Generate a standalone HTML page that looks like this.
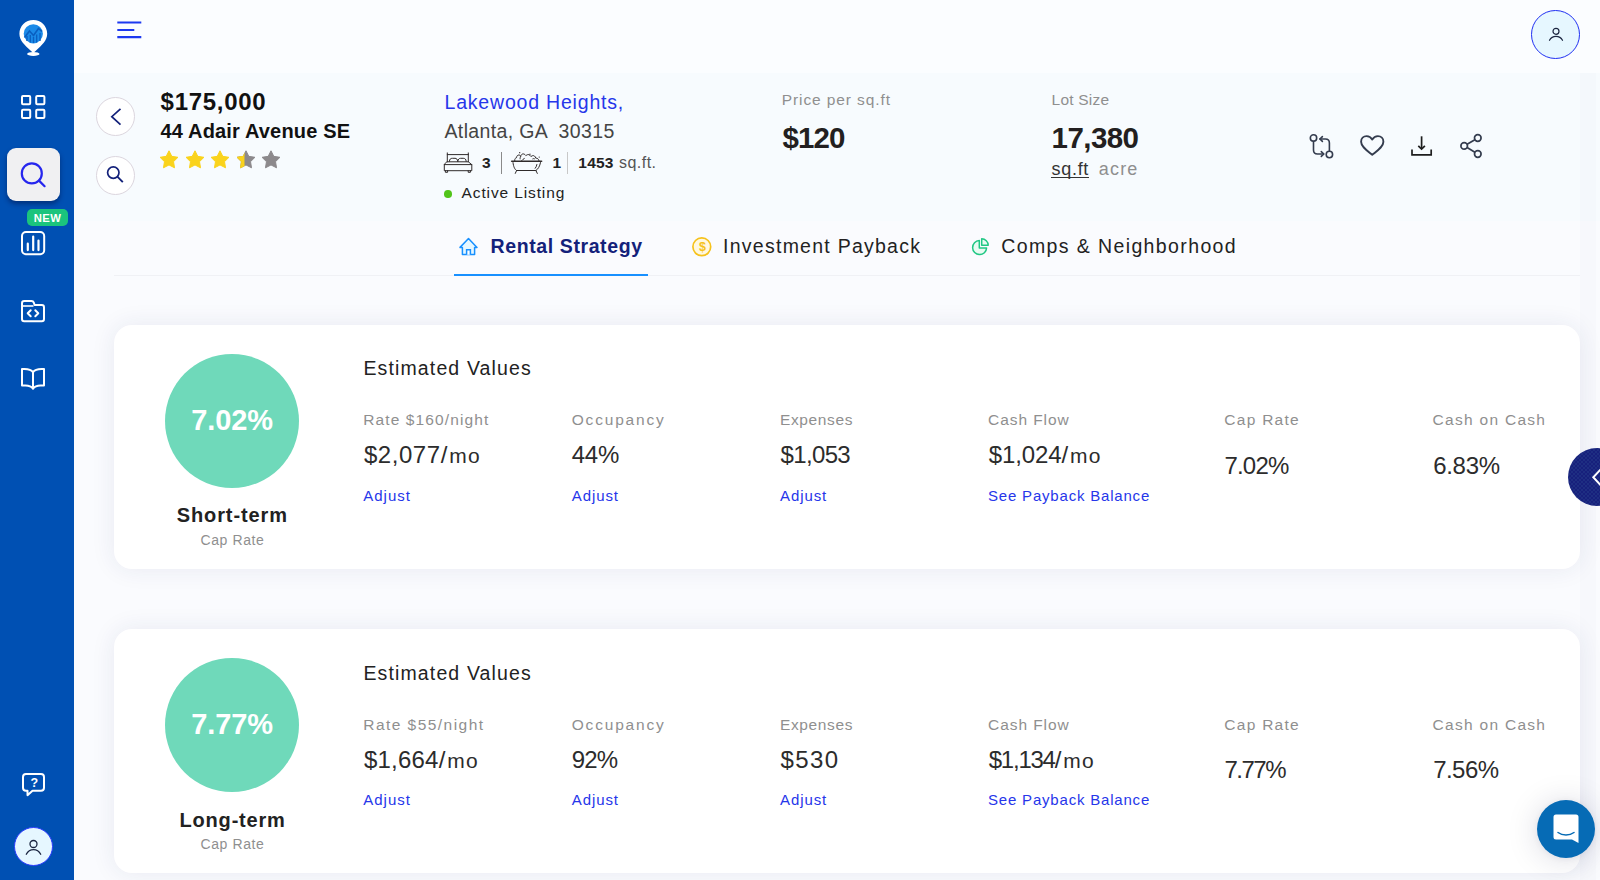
<!DOCTYPE html>
<html lang="en">
<head>
<meta charset="utf-8">
<title>Property Analysis</title>
<style>
*{box-sizing:border-box;margin:0;padding:0}
html,body{width:1600px;height:880px;overflow:hidden}
body{position:relative;background:#fafbfe;font-family:"Liberation Sans",sans-serif;color:#222}
.t{position:absolute;white-space:pre;display:block}
.abs{position:absolute}
svg{position:absolute;overflow:visible}
.side{left:0;top:0;width:74px;height:880px;background:#0050b3}
.topbar{left:74px;top:0;width:1526px;height:73px;background:#fbfdff}
.prop{left:74px;top:73px;width:1526px;height:148px;background:#f7fbfe}
.card{left:114px;width:1466px;height:244px;background:#fff;border-radius:18px;box-shadow:0 0 24px rgba(40,50,110,.085)}
.circ{width:134px;height:134px;border-radius:50%;background:#6fd9ba}
.rbtn{width:39px;height:39px;border-radius:50%;background:#fff;border:1px solid #dcd6de}
</style>
</head>
<body>
<div class="abs topbar"></div>
<div class="abs prop"></div>
<div class="abs side"></div>
<div class="abs" style="left:1580px;top:73px;width:16px;height:807px;background:rgba(30,40,100,.010)"></div>
<div class="abs" style="left:114px;top:275px;width:1466px;height:1px;background:#f0f1f5"></div>
<div class="abs" style="left:453.5px;top:274px;width:194.5px;height:2px;background:#1890ff"></div>
<div class="abs card" style="top:325px"></div>
<div class="abs card" style="top:629px"></div>
<span class="t" style="left:160.60px;top:88px;font-size:24px;line-height:27px;letter-spacing:0.718px;color:#111;font-weight:700;">$175,000</span>
<span class="t" style="left:160.50px;top:120px;font-size:20px;line-height:22px;letter-spacing:0.162px;color:#111;font-weight:700;">44 Adair Avenue SE</span>
<span class="t" style="left:444.50px;top:91px;font-size:19.5px;line-height:22px;letter-spacing:0.805px;color:#2636ea;">Lakewood Heights,</span>
<span class="t" style="left:444.50px;top:120px;font-size:19.5px;line-height:22px;letter-spacing:0.357px;color:#444;">Atlanta, GA  30315</span>
<span class="t" style="left:482.00px;top:154px;font-size:15.5px;line-height:17px;letter-spacing:0.000px;color:#222;font-weight:700;">3</span>
<span class="t" style="left:552.50px;top:154px;font-size:15.5px;line-height:17px;letter-spacing:0.000px;color:#222;font-weight:700;">1</span>
<span class="t" style="left:578.30px;top:154px;font-size:15.5px;line-height:17px;letter-spacing:0.233px;color:#222;font-weight:700;">1453</span>
<span class="t" style="left:619.00px;top:154px;font-size:16px;line-height:17px;letter-spacing:0.463px;color:#555;">sq.ft.</span>
<span class="t" style="left:461.60px;top:184px;font-size:15.5px;line-height:17px;letter-spacing:0.876px;color:#222;">Active Listing</span>
<span class="t" style="left:781.75px;top:91px;font-size:15.5px;line-height:17px;letter-spacing:0.902px;color:#8f8f8f;">Price per sq.ft</span>
<span class="t" style="left:782.50px;top:121px;font-size:29.5px;line-height:33px;letter-spacing:-0.875px;color:#231f20;font-weight:700;">$120</span>
<span class="t" style="left:1051.60px;top:91px;font-size:15.5px;line-height:17px;letter-spacing:0.200px;color:#8f8f8f;">Lot Size</span>
<span class="t" style="left:1051.60px;top:121px;font-size:29.5px;line-height:33px;letter-spacing:-0.570px;color:#231f20;font-weight:700;">17,380</span>
<span class="t" style="left:1051.60px;top:159px;font-size:18px;line-height:20px;letter-spacing:0.675px;color:#333;">sq.ft</span>
<div class="abs" style="left:1051px;top:176.5px;width:37.5px;height:1px;background:#333"></div>
<span class="t" style="left:1098.80px;top:159px;font-size:18px;line-height:20px;letter-spacing:1.167px;color:#8f8f8f;">acre</span>
<div class="abs" style="left:501px;top:152px;width:1px;height:22px;background:#8a8a8a"></div>
<div class="abs" style="left:567px;top:152px;width:1px;height:22px;background:#c8c8c8"></div>
<div class="abs" style="left:444px;top:190.2px;width:7.6px;height:7.6px;border-radius:50%;background:#52c41a"></div>
<span class="t" style="left:490.60px;top:235px;font-size:19.5px;line-height:22px;letter-spacing:0.596px;color:#13217a;font-weight:700;">Rental Strategy</span>
<span class="t" style="left:723.10px;top:235px;font-size:19.5px;line-height:22px;letter-spacing:1.251px;color:#222;">Investment Payback</span>
<span class="t" style="left:1001.30px;top:235px;font-size:19.5px;line-height:22px;letter-spacing:1.383px;color:#222;">Comps &amp; Neighborhood</span>
<div class="abs circ" style="left:165px;top:353.7px"></div>
<span class="t" style="left:191.25px;top:404px;font-size:29px;line-height:32px;letter-spacing:-0.125px;color:#fff;font-weight:700;">7.02%</span>
<span class="t" style="left:176.75px;top:504px;font-size:20px;line-height:22px;letter-spacing:0.889px;color:#222;font-weight:700;">Short-term</span>
<span class="t" style="left:200.50px;top:532px;font-size:14px;line-height:16px;letter-spacing:0.589px;color:#8f8f8f;">Cap Rate</span>
<span class="t" style="left:363.40px;top:357px;font-size:19.5px;line-height:22px;letter-spacing:1.139px;color:#222;">Estimated Values</span>
<span class="t" style="left:363.25px;top:411px;font-size:15.5px;line-height:17px;letter-spacing:1.112px;color:#8f8f8f;">Rate $160/night</span>
<span class="t" style="left:571.75px;top:411px;font-size:15.5px;line-height:17px;letter-spacing:1.805px;color:#8f8f8f;">Occupancy</span>
<span class="t" style="left:780.00px;top:411px;font-size:15.5px;line-height:17px;letter-spacing:0.634px;color:#8f8f8f;">Expenses</span>
<span class="t" style="left:988.00px;top:411px;font-size:15.5px;line-height:17px;letter-spacing:0.938px;color:#8f8f8f;">Cash Flow</span>
<span class="t" style="left:1224.25px;top:411px;font-size:15.5px;line-height:17px;letter-spacing:1.286px;color:#8f8f8f;">Cap Rate</span>
<span class="t" style="left:1432.50px;top:411px;font-size:15.5px;line-height:17px;letter-spacing:1.295px;color:#8f8f8f;">Cash on Cash</span>
<span class="t" style="left:363.90px;top:441px;font-size:24px;line-height:27px;letter-spacing:0.562px;color:#2c2c2c;">$2,077/<span style="font-size:21px;letter-spacing:1.212px;margin-left:1.39px">mo</span></span>
<span class="t" style="left:571.75px;top:441px;font-size:24px;line-height:27px;letter-spacing:-0.281px;color:#2c2c2c;">44%</span>
<span class="t" style="left:780.50px;top:441px;font-size:24px;line-height:27px;letter-spacing:-0.637px;color:#2c2c2c;">$1,053</span>
<span class="t" style="left:988.75px;top:441px;font-size:24px;line-height:27px;letter-spacing:-0.121px;color:#2c2c2c;">$1,024/<span style="font-size:21px;letter-spacing:1.213px;margin-left:2.07px">mo</span></span>
<span class="t" style="left:1224.50px;top:452px;font-size:24px;line-height:27px;letter-spacing:-0.828px;color:#2c2c2c;">7.02%</span>
<span class="t" style="left:1433.25px;top:452px;font-size:24px;line-height:27px;letter-spacing:-0.328px;color:#2c2c2c;">6.83%</span>
<span class="t" style="left:363.25px;top:487px;font-size:15px;line-height:17px;letter-spacing:1.012px;color:#2636ea;">Adjust</span>
<span class="t" style="left:571.75px;top:487px;font-size:15px;line-height:17px;letter-spacing:0.912px;color:#2636ea;">Adjust</span>
<span class="t" style="left:780.00px;top:487px;font-size:15px;line-height:17px;letter-spacing:0.912px;color:#2636ea;">Adjust</span>
<span class="t" style="left:988.00px;top:487px;font-size:15px;line-height:17px;letter-spacing:0.806px;color:#2636ea;">See Payback Balance</span>
<div class="abs circ" style="left:165px;top:658.3px"></div>
<span class="t" style="left:191.25px;top:708px;font-size:29px;line-height:32px;letter-spacing:-0.125px;color:#fff;font-weight:700;">7.77%</span>
<span class="t" style="left:179.50px;top:809px;font-size:20px;line-height:22px;letter-spacing:0.816px;color:#222;font-weight:700;">Long-term</span>
<span class="t" style="left:200.50px;top:836px;font-size:14px;line-height:16px;letter-spacing:0.589px;color:#8f8f8f;">Cap Rate</span>
<span class="t" style="left:363.40px;top:662px;font-size:19.5px;line-height:22px;letter-spacing:1.139px;color:#222;">Estimated Values</span>
<span class="t" style="left:363.25px;top:716px;font-size:15.5px;line-height:17px;letter-spacing:1.457px;color:#8f8f8f;">Rate $55/night</span>
<span class="t" style="left:571.75px;top:716px;font-size:15.5px;line-height:17px;letter-spacing:1.805px;color:#8f8f8f;">Occupancy</span>
<span class="t" style="left:780.00px;top:716px;font-size:15.5px;line-height:17px;letter-spacing:0.634px;color:#8f8f8f;">Expenses</span>
<span class="t" style="left:988.00px;top:716px;font-size:15.5px;line-height:17px;letter-spacing:0.938px;color:#8f8f8f;">Cash Flow</span>
<span class="t" style="left:1224.25px;top:716px;font-size:15.5px;line-height:17px;letter-spacing:1.286px;color:#8f8f8f;">Cap Rate</span>
<span class="t" style="left:1432.50px;top:716px;font-size:15.5px;line-height:17px;letter-spacing:1.295px;color:#8f8f8f;">Cash on Cash</span>
<span class="t" style="left:363.90px;top:746px;font-size:24px;line-height:27px;letter-spacing:0.229px;color:#2c2c2c;">$1,664/<span style="font-size:21px;letter-spacing:1.212px;margin-left:1.72px">mo</span></span>
<span class="t" style="left:571.75px;top:746px;font-size:24px;line-height:27px;letter-spacing:-0.906px;color:#2c2c2c;">92%</span>
<span class="t" style="left:780.50px;top:746px;font-size:24px;line-height:27px;letter-spacing:1.375px;color:#2c2c2c;">$530</span>
<span class="t" style="left:988.75px;top:746px;font-size:24px;line-height:27px;letter-spacing:-1.246px;color:#2c2c2c;">$1,134/<span style="font-size:21px;letter-spacing:1.213px;margin-left:3.20px">mo</span></span>
<span class="t" style="left:1224.50px;top:756px;font-size:24px;line-height:27px;letter-spacing:-1.516px;color:#2c2c2c;">7.77%</span>
<span class="t" style="left:1433.25px;top:756px;font-size:24px;line-height:27px;letter-spacing:-0.578px;color:#2c2c2c;">7.56%</span>
<span class="t" style="left:363.25px;top:791px;font-size:15px;line-height:17px;letter-spacing:1.012px;color:#2636ea;">Adjust</span>
<span class="t" style="left:571.75px;top:791px;font-size:15px;line-height:17px;letter-spacing:0.912px;color:#2636ea;">Adjust</span>
<span class="t" style="left:780.00px;top:791px;font-size:15px;line-height:17px;letter-spacing:0.912px;color:#2636ea;">Adjust</span>
<span class="t" style="left:988.00px;top:791px;font-size:15px;line-height:17px;letter-spacing:0.806px;color:#2636ea;">See Payback Balance</span>
<svg style="left:0px;top:0px" width="74" height="74" viewBox="0 0 74 74" >
<path d="M33.3 20C25.4 20 19.4 26.2 19.4 33.8c0 6.9 5.6 11.6 10.6 16.2 1.4 1.3 2.6 2.4 3.3 3.2.7-.8 1.9-1.9 3.3-3.2 5-4.600 10.600-9.300 10.600-16.200C47.200 26.200 41.200 20 33.300 20z" fill="#fff"/>
<ellipse cx="33.3" cy="53.9" rx="6.2" ry="2" fill="#fff"/>
<circle cx="33.3" cy="33.8" r="9.6" fill="#1b8ae8"/>
<path d="M24.500 37.500l5-6.500 4 4.500 5-7 3.500 3" fill="none" stroke="#0a5fc0" stroke-width="1.600"/>
<path d="M27 41v-5M30.300 42.500v-7.500M33.500 43v-6M36.700 42.500v-8M40 41v-8" stroke="#0a5fc0" stroke-width="1.300"/>
</svg>
<svg style="left:21px;top:95px" width="24.4" height="24" viewBox="0 0 24.4 24" >
<g fill="none" stroke="#fff" stroke-width="2" stroke-linejoin="round">
<rect x="1" y="1" width="8.2" height="8.2" rx="1"/><rect x="15.2" y="1" width="8.2" height="8.2" rx="1"/>
<rect x="1" y="14.8" width="8.2" height="8.2" rx="1"/><rect x="15.2" y="14.8" width="8.2" height="8.2" rx="1"/></g></svg>
<div class="abs" style="left:7px;top:148px;width:53px;height:53px;border-radius:9px;background:#f0f0f2;box-shadow:0 3px 5px rgba(0,10,60,.45)"></div>
<svg style="left:19px;top:161px" width="28" height="28" viewBox="0 0 28 28" ><circle cx="12.8" cy="12.400" r="10" fill="none" stroke="#2626ee" stroke-width="2.200"/><path d="M20 19.600l5.600 5.600" stroke="#2626ee" stroke-width="2.200" stroke-linecap="round"/></svg>
<div class="abs" style="left:27.4px;top:208.7px;width:40.2px;height:17.2px;border-radius:5px;background:#1bc47d"></div>
<span class="t" style="left:33.70px;top:212px;font-size:11.3px;line-height:12px;letter-spacing:0.412px;color:#fff;font-weight:700;">NEW</span>
<svg style="left:21.1px;top:230.7px" width="24.2" height="24.2" viewBox="0 0 24.2 24.2" ><rect x="1" y="1" width="22.2" height="22.2" rx="4" fill="none" stroke="#fff" stroke-width="2"/>
<path d="M6.800 19.100v-6.400M12.200 19.100V5.500M17.500 19.100V9.500" stroke="#fff" stroke-width="2.200" stroke-linecap="round"/></svg>
<svg style="left:21px;top:299.6px" width="24" height="22.2" viewBox="0 0 24 22.200" ><path d="M1 19V3.200Q1 1 3.200 1h7.300q1.700 0 2.300 1.700l.8 2.300h7.200Q23 5 23 7.200V19q0 2.200-2.200 2.200H3.200Q1 21.200 1 19z" fill="none" stroke="#fff" stroke-width="2" stroke-linejoin="round"/>
<path d="M1.500 6h11" stroke="#fff" stroke-width="1.600"/>
<path d="M9.700 10.300l-3 3 3 3M14.300 10.300l3 3-3 3" fill="none" stroke="#fff" stroke-width="2" stroke-linecap="round" stroke-linejoin="round"/></svg>
<svg style="left:21px;top:367.5px" width="24" height="22.5" viewBox="0 0 24 22.500" ><path d="M12 4.200C10.500 2 7.500 1 3.500 1H1v16.500h3.500c3.500 0 6 1 7.500 3.300 1.500-2.300 4-3.300 7.500-3.300H23V1h-2.500c-4 0-7 1-8.500 3.200zM12 4.200v16.600" fill="none" stroke="#fff" stroke-width="2" stroke-linejoin="round"/></svg>
<svg style="left:21.9px;top:772.9px" width="23" height="23.4" viewBox="0 0 23 23.400" ><path d="M4 1h15q3 0 3 3v10.700q0 3-3 3h-8.500l-5 4.500v-4.500H4q-3 0-3-3V4q0-3 3-3z" fill="none" stroke="#fff" stroke-width="2" stroke-linejoin="round"/></svg>
<span class="t" style="left:30.50px;top:776px;font-size:12.5px;line-height:14px;letter-spacing:0.000px;color:#fff;font-weight:700;">?</span>
<div class="abs" style="left:14px;top:826.8px;width:39.4px;height:39.4px;border-radius:50%;background:#e6f7ff;border:1px solid #2b3bff"></div>
<svg style="left:24px;top:836px" width="20" height="20" viewBox="0 0 20 20" ><circle cx="9.500" cy="8" r="3.500" fill="none" stroke="#1b2540" stroke-width="1.300"/><path d="M2.300 18.200c1.800-3.400 4.300-4.600 7.200-4.600s5.400 1.200 7.200 4.600" fill="none" stroke="#1b2540" stroke-width="1.300" stroke-linecap="round"/></svg>
<svg style="left:116.9px;top:21.1px" width="25" height="18" viewBox="0 0 25 18" ><path d="M.300 1.500h24M.300 9h17M.300 16.200h24" stroke="#1d39f0" stroke-width="2.200"/></svg>
<div class="abs" style="left:1531.2px;top:9.5px;width:49px;height:49px;border-radius:50%;background:#e6f7ff;border:1.500px solid #2030f2"></div>
<svg style="left:1547.5px;top:26px" width="16" height="16" viewBox="0 0 16 16" ><circle cx="8" cy="5.300" r="3" fill="none" stroke="#1b2540" stroke-width="1.200"/><path d="M1.500 14.300c1.500-2.800 3.800-3.900 6.500-3.900s5 1.100 6.500 3.900" fill="none" stroke="#1b2540" stroke-width="1.200" stroke-linecap="round"/></svg>
<div class="abs rbtn" style="left:96.2px;top:97.3px"></div>
<div class="abs rbtn" style="left:96.2px;top:156px"></div>
<svg style="left:108px;top:106px" width="16" height="22" viewBox="0 0 16 22" ><path d="M12.500 2.800L3.800 10.700l8.700 7.900" fill="none" stroke="#13217a" stroke-width="1.700"/></svg>
<svg style="left:105.2px;top:164.2px" width="20" height="20" viewBox="0 0 20 20" ><circle cx="8.300" cy="8.600" r="5.700" fill="none" stroke="#13217a" stroke-width="1.700"/><path d="M12.400 12.700l5.400 5.400" stroke="#13217a" stroke-width="1.900"/></svg>
<svg style="left:158.9px;top:149.6px" width="20" height="19.5" viewBox="0 0 20 19.500" ><path d="M10.00 0.80L12.79 6.36L18.94 7.30L14.52 11.67L15.53 17.80L10.00 14.95L4.47 17.80L5.48 11.67L1.06 7.30L7.21 6.36z" fill="#fad31c" stroke="#fad31c" stroke-width="1" stroke-linejoin="round"/></svg>
<svg style="left:184.5px;top:149.6px" width="20" height="19.5" viewBox="0 0 20 19.500" ><path d="M10.00 0.80L12.79 6.36L18.94 7.30L14.52 11.67L15.53 17.80L10.00 14.95L4.47 17.80L5.48 11.67L1.06 7.30L7.21 6.36z" fill="#fad31c" stroke="#fad31c" stroke-width="1" stroke-linejoin="round"/></svg>
<svg style="left:210.1px;top:149.6px" width="20" height="19.5" viewBox="0 0 20 19.500" ><path d="M10.00 0.80L12.79 6.36L18.94 7.30L14.52 11.67L15.53 17.80L10.00 14.95L4.47 17.80L5.48 11.67L1.06 7.30L7.21 6.36z" fill="#fad31c" stroke="#fad31c" stroke-width="1" stroke-linejoin="round"/></svg>
<svg style="left:235.7px;top:149.6px" width="20" height="19.5" viewBox="0 0 20 19.500" ><path d="M10.00 0.80L12.79 6.36L18.94 7.30L14.52 11.67L15.53 17.80L10.00 14.95L4.47 17.80L5.48 11.67L1.06 7.30L7.21 6.36z" fill="#8c898c" stroke="#8c898c" stroke-width="1" stroke-linejoin="round"/><path d="M10.00 0.80L12.79 6.36L18.94 7.30L14.52 11.67L15.53 17.80L10.00 14.95L4.47 17.80L5.48 11.67L1.06 7.30L7.21 6.36z" fill="#fad31c" stroke="#fad31c" stroke-width="1" stroke-linejoin="round" clip-path="inset(-1px 58% -1px -1px)"/></svg>
<svg style="left:261.3px;top:149.6px" width="20" height="19.5" viewBox="0 0 20 19.500" ><path d="M10.00 0.80L12.79 6.36L18.94 7.30L14.52 11.67L15.53 17.80L10.00 14.95L4.47 17.80L5.48 11.67L1.06 7.30L7.21 6.36z" fill="#8c898c" stroke="#8c898c" stroke-width="1" stroke-linejoin="round"/></svg>
<svg style="left:440px;top:148px" width="110" height="30" viewBox="0 0 110 30" ><g fill="none" stroke="#2f2a2a" stroke-width="1" stroke-linejoin="round" stroke-linecap="round">
<path d="M7.300 4.900v8.900M28.300 4.900v8.900M7.300 6.600h21"/>
<path d="M9.400 13.300c.2-2.300 1.200-3 3-3h2.600c1.600 0 2.500.9 2.700 3M17.900 13.300c.2-2.100 1.100-3 2.700-3h2.600c1.800 0 2.800.7 3 3"/>
<path d="M7.300 13.800h21l3.500 2.800v6.100H4.300v-6.100z"/>
<path d="M4.300 16.600h27.500"/>
<path d="M5.400 22.700v1.600h2.200v-1.600M28.200 22.700v1.600h2.200v-1.600"/>
<path d="M71.700 13.300h29.900" stroke-width="1.600"/>
<path d="M73 14.600c.5 4.400 1.900 6.900 3.600 7.900h19.300c2-1.300 3.900-4 4.600-7.900"/>
<path d="M76.600 22.500l-1.300 2.900M95.900 22.500l1.400 2.900"/>
<path d="M74.700 12.600c-.2-1.800 .8-2.700 1.800-2.900 .2-1.700 1.200-2.900 2.500-2.700 .7-.1 1.200 .5 1.500 1.300 .6-1.500 1.600-2.500 2.800-2.400 1.300 .1 2 1 2.600 1.800 .9-.9 2-1.400 3.100-1 1 .4 1.500 1.200 2 1.900 1-1 2.300-1.300 3.300-.7 1 .6 1.300 1.500 1.500 2.300 1.400-.2 2.900 .7 3.200 2.400"/>
<path d="M80.800 8.300c-.6 1-.8 1.700-.7 2.600M84.300 10.500c-1 .5-2 1.300-2.600 2.100M92.800 10.800c.5-.3 1.200-.3 1.700 0"/>
<path d="M96.900 16.500c-.3 1.600-.8 2.700-1.700 3.800"/>
</g>
<g fill="#2a2424"><circle cx="79.700" cy="4.700" r=".65"/><circle cx="90" cy="6.200" r=".6"/><circle cx="99.200" cy="9.100" r=".6"/></g></svg>
<svg style="left:1309px;top:133.5px" width="24.5" height="24.5" viewBox="0 0 24.500 24.500" ><g fill="none" stroke="#343c4e" stroke-width="1.600" stroke-linecap="round" stroke-linejoin="round">
<circle cx="4.500" cy="4" r="3.200"/><circle cx="20.400" cy="20.500" r="3.200"/>
<path d="M4.500 7.300v8.700q0 4 4 4h6"/><path d="M12.300 17.600l2.500 2.400-2.500 2.400"/>
<path d="M20.400 17.200V9q0-4-4-4h-5.500"/><path d="M13.400 2.600L10.900 5l2.500 2.400"/></g></svg>
<svg style="left:1359.5px;top:135.4px" width="24.5" height="21" viewBox="0 0 24.500 21" ><path d="M12.250 19.800C7 15.500 1.100 11.700 1.100 6.700 1.100 3.500 3.500 1.100 6.600 1.100c2.300 0 4.400 1.300 5.650 3.400C13.500 2.400 15.600 1.100 17.900 1.100c3.100 0 5.500 2.400 5.500 5.600 0 5-5.900 8.800-11.150 13.100z" fill="none" stroke="#343c4e" stroke-width="1.900" stroke-linejoin="round"/></svg>
<svg style="left:1411px;top:136px" width="21.2" height="20" viewBox="0 0 21.200 20" ><g fill="none" stroke="#1e1e1e" stroke-width="1.700"><path d="M10.600 .300v12.200"/><path d="M7.300 9.800l3.300 3.300 3.300-3.300" stroke-linejoin="miter"/><path d="M1 13.400v5.400h19.200v-5.400"/></g></svg>
<svg style="left:1460px;top:133.8px" width="22.2" height="24" viewBox="0 0 22.200 24" ><g fill="none" stroke="#343c4e" stroke-width="1.700"><circle cx="17.800" cy="4" r="3.300"/><circle cx="4.200" cy="11.900" r="3.300"/><circle cx="17.800" cy="20" r="3.300"/><path d="M7.100 10.200l7.800-4.500M7.100 13.600l7.800 4.600"/></g></svg>
<svg style="left:459.2px;top:237.6px" width="19" height="17.7" viewBox="0 0 19 17.700" ><path d="M9.500 .600L1 9.400h2.400v7.200h12.200V9.600H18z" fill="#e6f7ff" stroke="#1890ff" stroke-width="1.500" stroke-linejoin="round"/><path d="M7.600 16.800v-5h3.800v5" fill="#fff" stroke="#1890ff" stroke-width="1.500"/></svg>
<svg style="left:692.4px;top:236.9px" width="19.6" height="19.6" viewBox="0 0 19.600 19.600" ><circle cx="9.800" cy="9.800" r="8.900" fill="#fff8e1" stroke="#f6c21c" stroke-width="1.700"/></svg>
<span class="t" style="left:698.90px;top:240px;font-size:12.5px;line-height:14px;letter-spacing:0.000px;color:#f6c21c;font-weight:700;">$</span>
<svg style="left:972px;top:238px" width="17" height="17.2" viewBox="0 0 17 17.200" ><path d="M7.300 2.600A7 7 0 1 0 14.600 9.900H7.300z" fill="#e8fbf2" stroke="#20c784" stroke-width="1.500" stroke-linejoin="round"/><path d="M9.700.8A6.500 6.500 0 0 1 16.200 7.300H9.700z" fill="#e8fbf2" stroke="#20c784" stroke-width="1.500" stroke-linejoin="round"/></svg>
<div class="abs" style="left:1568.2px;top:448.2px;width:58px;height:58px;border-radius:50%;background-color:#17207c;background-image:radial-gradient(rgba(70,130,170,.30) .5px,transparent .9px),radial-gradient(rgba(70,130,170,.30) .5px,transparent .9px);background-size:4px 4px;background-position:0 0,2px 2px"></div>
<svg style="left:1590px;top:466px" width="12" height="23" viewBox="0 0 12 23" ><path d="M11.500 2.500L3.300 11.300l8.200 8.800" fill="none" stroke="#fff" stroke-width="2"/></svg>
<div class="abs" style="left:1537px;top:800px;width:58px;height:58px;border-radius:50%;background:#066bb5;box-shadow:0 1px 6px rgba(10,10,60,.06),0 2px 32px rgba(10,10,60,.15)"></div>
<svg style="left:1553px;top:813.5px" width="26" height="30" viewBox="0 0 26 30" ><path d="M3 .5h20q2.500 0 2.500 2.500v26l-6.500-3.500H3Q.5 25.500.5 23V3Q.5.500 3 .500z" fill="#fff"/><path d="M5 18.500c4.500 3.400 11.500 3.400 16 0" fill="none" stroke="#066bb5" stroke-width="1.500" stroke-linecap="round"/></svg>
</body>
</html>
